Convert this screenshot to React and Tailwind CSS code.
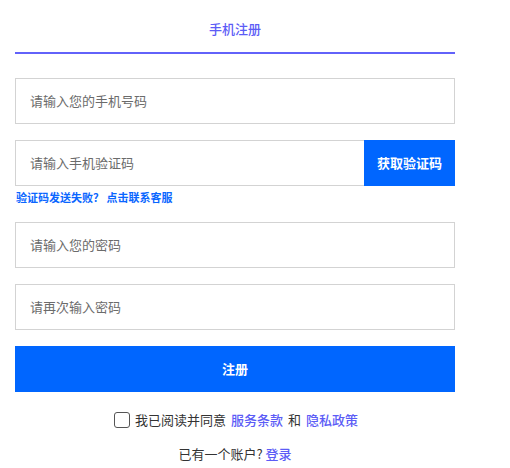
export default function App() {
  const font = { fontFamily: '"Noto Sans CJK SC", "Liberation Sans", sans-serif' };
  return (
    <div className="w-[510px] h-[468px] bg-white overflow-hidden" style={font}>
      <div className="ml-[15px] w-[440px] flex flex-col">
        <div className="pt-[20px] pb-[14px] border-b-2 border-[#6262fa] text-center text-[13px] leading-[18px] font-medium text-[#5c5cf6]">
          手机注册
        </div>
        <div className="mt-[24px] h-[46px] border border-[#d3d3d3] flex items-center pl-[14px] text-[13px] text-[#6b6b6b]">
          请输入您的手机号码
        </div>
        <div className="mt-[16px] h-[46px] flex">
          <div className="flex-1 border border-[#d3d3d3] border-r-0 flex items-center pl-[14px] text-[13px] text-[#6b6b6b]">
            请输入手机验证码
          </div>
          <button className="w-[91px] bg-[#0066ff] text-white text-[13px] font-bold flex items-center justify-center">
            获取验证码
          </button>
        </div>
        <div className="mt-[3px] pl-[1px] text-[11px] leading-[16px] font-bold text-[#0a66ff]">
          验证码发送失败？ 点击联系客服
        </div>
        <div className="mt-[17px] h-[46px] border border-[#d3d3d3] flex items-center pl-[14px] text-[13px] text-[#6b6b6b]">
          请输入您的密码
        </div>
        <div className="mt-[16px] h-[46px] border border-[#d3d3d3] flex items-center pl-[14px] text-[13px] text-[#6b6b6b]">
          请再次输入密码
        </div>
        <button className="mt-[16px] h-[46px] bg-[#0066ff] text-white text-[13px] font-bold flex items-center justify-center">
          注册
        </button>
        <div className="mt-[19px] ml-[2px] flex items-center justify-center text-[13px] leading-[18px] text-[#333]">
          <span className="w-[16px] h-[16px] border border-[#555] rounded-[3px] mr-[5px] bg-white"></span>
          <span>我已阅读并同意</span>
          <span className="ml-[5px] font-medium text-[#5c5cf6]">服务条款</span>
          <span className="mx-[5px]">和</span>
          <span className="font-medium text-[#5c5cf6]">隐私政策</span>
        </div>
        <div className="mt-[16px] text-center text-[13px] leading-[18px] text-[#333]">
          已有一个账户? <span className="font-medium text-[#5c5cf6]">登录</span>
        </div>
      </div>
    </div>
  );
}
